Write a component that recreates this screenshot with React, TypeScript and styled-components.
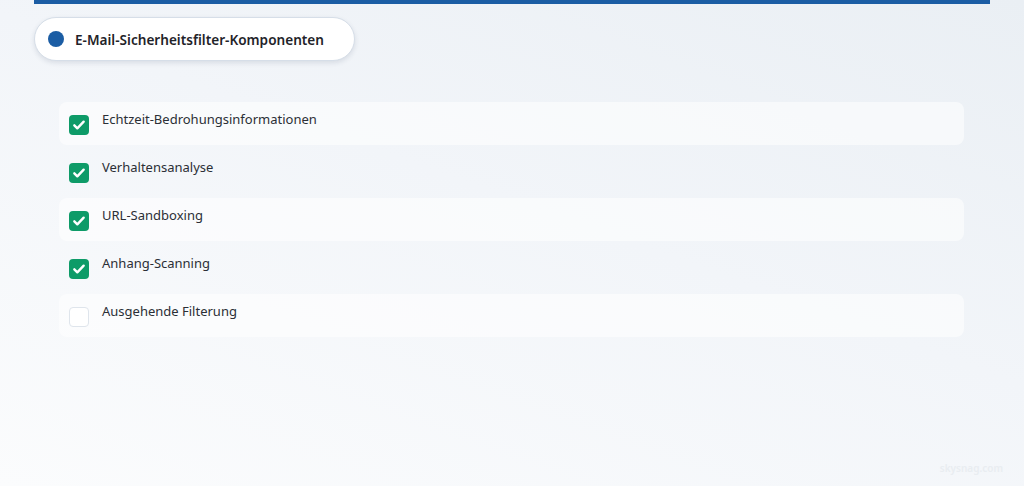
import styled, { createGlobalStyle } from 'styled-components';

const GlobalStyle = createGlobalStyle`
  html, body {
    margin: 0;
    padding: 0;
  }
  body {
    min-height: 486px;
    font-family: 'Noto Sans', 'Open Sans', sans-serif;
    background: linear-gradient(200deg, #eaeff4 0%, #f2f5f9 45%, #fbfcfd 100%);
    overflow: hidden;
  }
`;

const filters = [
  { label: 'Echtzeit-Bedrohungsinformationen', checked: true },
  { label: 'Verhaltensanalyse', checked: true },
  { label: 'URL-Sandboxing', checked: true },
  { label: 'Anhang-Scanning', checked: true },
  { label: 'Ausgehende Filterung', checked: false },
];

const App = () => {
  return (
    <>
      <GlobalStyle />
      <Page>
        <TopBar />
        <Badge>
          <Dot />
          <BadgeTitle>E-Mail-Sicherheitsfilter-Komponenten</BadgeTitle>
        </Badge>
        <List>
          {filters.map((f, i) => (
            <Row key={f.label} $shaded={i % 2 === 0}>
              <Box $checked={f.checked}>
                {f.checked && (
                  <svg width="16" height="16" viewBox="0 0 24 24" fill="none">
                    <path
                      d="M5 12.5l4.5 4.5L19 7"
                      stroke="#fff"
                      strokeWidth="3.6"
                      strokeLinecap="round"
                      strokeLinejoin="round"
                    />
                  </svg>
                )}
              </Box>
              <Label>{f.label}</Label>
            </Row>
          ))}
        </List>
        <Watermark>skysnag.com</Watermark>
      </Page>
    </>
  );
};

export default App;

const Page = styled.div`
  position: relative;
  height: 486px;
  padding: 0 34px;
  box-sizing: border-box;
`;

const TopBar = styled.div`
  width: 956px;
  height: 4px;
  background-color: #1b5da4;
`;

const Badge = styled.div`
  display: flex;
  align-items: center;
  width: 321px;
  height: 44px;
  margin-top: 13px;
  box-sizing: border-box;
  padding-left: 13px;
  background-color: #fff;
  border: 1px solid #d6dee8;
  border-radius: 22px;
  box-shadow: 0 2px 5px rgba(30, 50, 80, 0.12);
`;

const Dot = styled.span`
  width: 16px;
  height: 16px;
  border-radius: 50%;
  background-color: #1b5da4;
  margin-right: 11px;
`;

const BadgeTitle = styled.span`
  font-size: 13.6px;
  font-weight: 600;
  color: #1f2329;
`;

const List = styled.div`
  display: flex;
  flex-direction: column;
  gap: 5px;
  width: 905px;
  margin: 41px 0 0 25px;
`;

const Row = styled.div<{ $shaded: boolean }>`
  display: flex;
  align-items: flex-start;
  height: 43px;
  box-sizing: border-box;
  padding: 7px 10px 0;
  border-radius: 8px;
  background-color: ${(p) => (p.$shaded ? 'rgba(255, 255, 255, 0.55)' : 'transparent')};
`;

const Box = styled.span<{ $checked: boolean }>`
  display: flex;
  align-items: center;
  justify-content: center;
  flex-shrink: 0;
  width: 20px;
  height: 20px;
  margin-top: 6px;
  box-sizing: border-box;
  border-radius: 4px;
  background-color: ${(p) => (p.$checked ? '#0e9b68' : '#fff')};
  border: ${(p) => (p.$checked ? 'none' : '1px solid #dfe5ec')};
`;

const Label = styled.span`
  margin-left: 13px;
  font-size: 13px;
  line-height: 20px;
  color: #2b2f36;
`;

const Watermark = styled.div`
  position: absolute;
  right: 21px;
  bottom: 11px;
  font-size: 10px;
  font-weight: 600;
  color: #e9edf1;
`;
